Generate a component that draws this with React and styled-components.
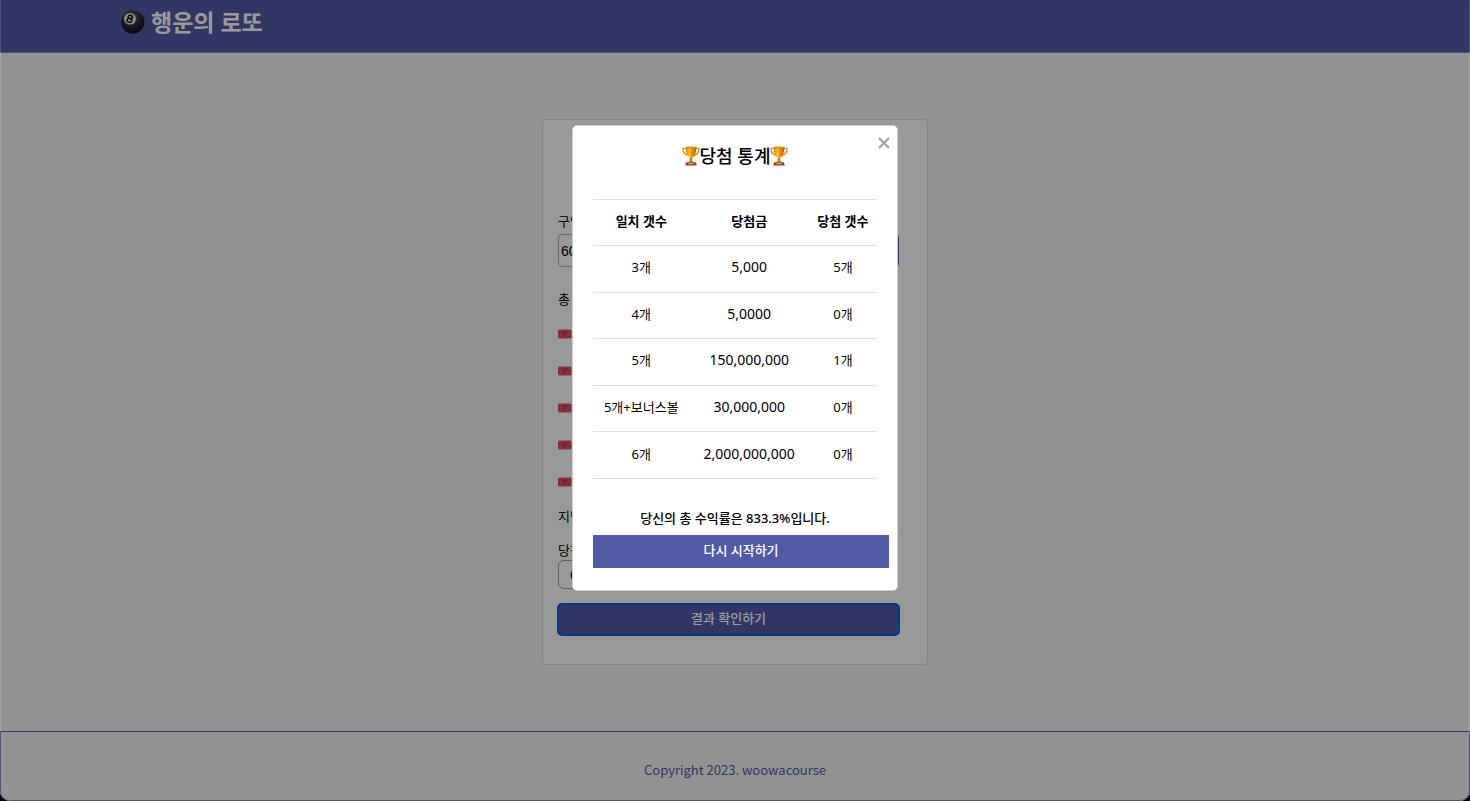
import React from "react";
import styled, { createGlobalStyle } from "styled-components";

const GlobalStyle = createGlobalStyle`
  * { box-sizing: border-box; }
  html { background: #000; }
  body {
    margin: 0;
    color: #000;
    font-family: "Noto Sans", "Noto Sans CJK KR", sans-serif;
    font-size: 13px;
    line-height: 20px;
  }
  h1, h2, p, ul { margin: 0; padding: 0; }
  button, input { font-family: inherit; }
`;

const primary = "#525aa7";

const Page = styled.div`
  min-height: 100vh;
  display: flex;
  flex-direction: column;
  background: #f5f5f5;
  border-radius: 0 0 10px 10px;
  overflow: hidden;
`;

const Header = styled.header`
  display: flex;
  align-items: center;
  gap: 6px;
  height: 53px;
  padding: 0 120px 8px;
  background: ${primary};
  border-bottom: 1px solid #8087bb;
`;

const Brand = styled.h1`
  color: #fff;
  font-size: 23px;
  line-height: 32px;
  font-weight: 700;
`;

const Main = styled.main`
  flex: 1;
  display: flex;
  align-items: center;
  justify-content: center;
`;

const Card = styled.section`
  width: 386px;
  padding: 91px 28px 29px 15px;
  background: #fff;
  border: 1px solid #dcdcdc;
  border-radius: 4px;
`;

const Form = styled.form`
  display: flex;
  flex-direction: column;
`;

const Label = styled.label`
  line-height: 20px;
`;

const WinningLabel = styled(Label)`
  margin-top: 14px;
`;

const Row = styled.div`
  display: flex;
  gap: 12px;
  margin-top: 3px;
`;

const AmountInput = styled.input`
  flex: 1;
  min-width: 0;
  height: 33px;
  padding: 0 2px;
  border: 1px solid #b4b4b4;
  border-radius: 4px;
  background: #fff;
  font-family: "Liberation Sans", sans-serif;
  font-size: 14px;
`;

const Button = styled.button`
  width: ${(p) => p.$width || "auto"};
  height: ${(p) => p.$height || "33px"};
  padding: 0 12px 4px;
  border: 0;
  border-radius: ${(p) => p.$radius || "0"};
  background: ${primary};
  color: #fff;
  font-size: 13px;
  line-height: 20px;
  font-weight: 500;
  outline: ${(p) => (p.$focused ? "2px solid #0061e1" : "none")};
  outline-offset: -1px;
`;

const Summary = styled.p`
  margin-top: 22px;
`;

const Tickets = styled.ul`
  margin: 6px 0;
  list-style: none;
`;

const Ticket = styled.li`
  display: flex;
  align-items: center;
  height: 37px;
`;

const Numbers = styled.div`
  display: flex;
  gap: 4px;
  margin-bottom: 15px;
`;

const NumberInput = styled.input`
  width: 32px;
  height: 29px;
  padding: 0;
  border: 1px solid #a0a0a0;
  border-radius: 6px;
  background: #fff;
  text-align: center;
  font-family: "Liberation Sans", sans-serif;
  font-size: 14px;
`;

const Footer = styled.footer`
  height: 70px;
  padding-top: 28px;
  border: 1px solid ${primary};
  border-radius: 0 0 10px 10px;
  color: ${primary};
  text-align: center;
  font-family: "Noto Sans CJK KR", sans-serif;
  font-size: 13px;
  line-height: 20px;
`;

const Overlay = styled.div`
  position: fixed;
  inset: 0;
  display: flex;
  align-items: flex-start;
  justify-content: center;
  padding-top: 124px;
  background: rgba(0, 0, 0, 0.4);
  border: 1px solid rgba(255, 255, 255, 0.15);
  border-top: 1px solid transparent;
  border-radius: 0 0 10px 10px;
`;

const Modal = styled.div`
  position: relative;
  width: 326px;
  padding: 15px 20px 22px;
  background: #fff;
  border: 1px solid #ccc;
  border-radius: 5px;
`;

const ModalTitle = styled.h2`
  display: flex;
  align-items: center;
  justify-content: center;
  margin-bottom: 28px;
  font-size: 18px;
  line-height: 30px;
  font-weight: 500;
`;

const CloseButton = styled.button`
  position: absolute;
  top: 10px;
  right: 6px;
  display: flex;
  padding: 0;
  border: 0;
  background: none;
  color: #a0a0a0;
`;

const ResultTable = styled.table`
  width: 100%;
  height: 280px;
  table-layout: fixed;
  border-collapse: collapse;
  text-align: center;

  th, td {
    height: 46px;
    padding: 0 0 3px;
    border-top: 1px solid #dcdcdc;
    border-bottom: 1px solid #dcdcdc;
    white-space: nowrap;
  }
  th { font-weight: 700; }
`;

const HeadCell = styled.th`
  width: ${(p) => p.$width};
`;

const Prize = styled.td`
  font-size: 14px;
`;

const Profit = styled.p`
  margin: 29px 0 7px;
  text-align: center;
  font-weight: 500;
`;

function EightBall() {
  return (
    <svg width="25" height="26" viewBox="0 0 25 26" aria-hidden="true">
      <defs>
        <radialGradient id="ball" cx="45%" cy="30%" r="70%">
          <stop offset="0" stopColor="#686868" />
          <stop offset="0.5" stopColor="#343434" />
          <stop offset="1" stopColor="#0c0c0c" />
        </radialGradient>
      </defs>
      <circle cx="12.8" cy="13" r="11.6" fill="url(#ball)" />
      <ellipse cx="10" cy="9.8" rx="6" ry="5.8" fill="#eee" />
      <g transform="rotate(12 10 9.8)" fill="none" stroke="#1b1b1b" strokeWidth="1.6">
        <ellipse cx="10" cy="7.9" rx="2.2" ry="1.6" />
        <ellipse cx="9.8" cy="11.5" rx="2.5" ry="1.9" />
      </g>
    </svg>
  );
}

function Trophy() {
  return (
    <svg width="18" height="20" viewBox="0 0 18 20" aria-hidden="true">
      <defs>
        <linearGradient id="gold">
          <stop offset="0" stopColor="#d07a00" />
          <stop offset="0.35" stopColor="#ffc42e" />
          <stop offset="0.6" stopColor="#e89600" />
          <stop offset="1" stopColor="#ae5c00" />
        </linearGradient>
      </defs>
      <path
        d="M4.5 2.4H1C.8 6.2 3 8.6 6.8 9.8M13.5 2.4H17c.2 3.8-2 6.2-5.8 7.4"
        fill="none" stroke="#dc9622" strokeWidth="1.4"
      />
      <path d="M3.6 1.2h10.8c0 5.2-1.3 8.8-4.2 10.8H7.8C4.9 10 3.6 6.4 3.6 1.2Z" fill="url(#gold)" />
      <ellipse cx="9" cy="1.6" rx="5.5" ry="1" fill="#d98c10" />
      <path d="M8 12h2l.5 3 1.8 1.5H5.7L7.5 15Z" fill="#cb7a08" />
      <path d="M4.2 16.2h9.6l1 3.3H3.2Z" fill="#a6371d" />
      <path d="M6.3 16.8h5.4v1.5H6.3Z" fill="#e0a13a" />
    </svg>
  );
}

function TicketIcon() {
  return (
    <svg width="14" height="10" viewBox="0 0 14 10" aria-hidden="true">
      <rect x="0" y="0.5" width="13.5" height="9" rx="1.5" fill="#e85368" />
      <path d="M1.7 2.3v5.4M12 2.3v5.4" stroke="#cf4158" strokeWidth="1" />
      <path d="M3.8 3h6M4.8 5h4M5.3 7h3" stroke="#8c2c40" strokeWidth="1.2" />
    </svg>
  );
}

const ticketIds = [1, 2, 3, 4, 5];

const results = [
  ["3개", "5,000", "5개"],
  ["4개", "5,0000", "0개"],
  ["5개", "150,000,000", "1개"],
  ["5개+보너스볼", "30,000,000", "0개"],
  ["6개", "2,000,000,000", "0개"],
];

export default function App() {
  return (
    <>
      <GlobalStyle />
      <Page>
        <Header>
          <EightBall />
          <Brand>행운의 로또</Brand>
        </Header>
        <Main>
          <Card>
            <Form>
              <Label htmlFor="amount">구입</Label>
              <Row>
                <AmountInput id="amount" defaultValue="60" />
                <Button type="button" $width="56px" $radius="4px" aria-label="구입" />
              </Row>
            </Form>
            <Summary>총</Summary>
            <Tickets>
              {ticketIds.map((id) => (
                <Ticket key={id}><TicketIcon /></Ticket>
              ))}
            </Tickets>
            <Form>
              <p>지난</p>
              <WinningLabel htmlFor="winning">당첨</WinningLabel>
              <Numbers>
                <NumberInput id="winning" defaultValue="6" />
              </Numbers>
              <Button type="button" $width="100%" $height="31px" $radius="4px" $focused>결과 확인하기</Button>
            </Form>
          </Card>
        </Main>
        <Footer>Copyright 2023. woowacourse</Footer>
      </Page>
      <Overlay>
        <Modal role="dialog" aria-modal="true" aria-labelledby="result-title">
          <CloseButton type="button" aria-label="닫기">
            <svg width="14" height="14" viewBox="0 0 14 14" fill="none" stroke="currentColor" strokeWidth="2.2">
              <path d="M2 2l10 10M12 2L2 12" />
            </svg>
          </CloseButton>
          <ModalTitle id="result-title"><Trophy />당첨 통계<Trophy /></ModalTitle>
          <ResultTable>
            <thead>
              <tr>
                <HeadCell $width="34%">일치 갯수</HeadCell>
                <HeadCell $width="42%">당첨금</HeadCell>
                <HeadCell $width="24%">당첨 갯수</HeadCell>
              </tr>
            </thead>
            <tbody>
              {results.map(([match, prize, count]) => (
                <tr key={match}>
                  <td>{match}</td>
                  <Prize>{prize}</Prize>
                  <td>{count}</td>
                </tr>
              ))}
            </tbody>
          </ResultTable>
          <Profit>당신의 총 수익률은 833.3%입니다.</Profit>
          <Button type="button" $width="calc(100% + 12px)">다시 시작하기</Button>
        </Modal>
      </Overlay>
    </>
  );
}
